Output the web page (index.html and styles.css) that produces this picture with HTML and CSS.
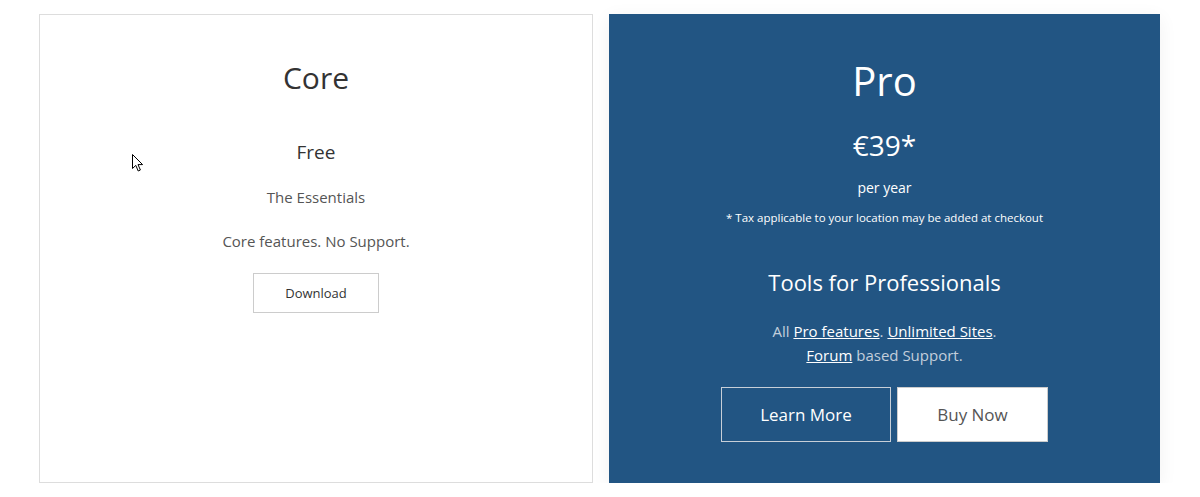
FILE: index.html
```html
<!DOCTYPE html>
<html lang="en">
<head>
    <meta charset="UTF-8">
    <meta name="viewport" content="width=device-width, initial-scale=1.0">
    <title>Pricing</title>
    <link rel="stylesheet" href="styles.css">
</head>
<body>
    <div class="pricing">
        <!-- Plan gratuito -->
        <div class="plan plan-core">
            <h2 class="plan-name">Core</h2>
            <p class="plan-price">Free</p>
            <p class="plan-tagline">The Essentials</p>
            <p class="plan-desc">Core features. No Support.</p>
            <a class="btn btn-plain" href="#">Download</a>
        </div>

        <!-- Plan de pago -->
        <div class="plan plan-pro">
            <h2 class="plan-name">Pro</h2>
            <p class="plan-price">€39*</p>
            <p class="plan-period">per year</p>
            <p class="plan-note">* Tax applicable to your location may be added at checkout</p>
            <h3 class="plan-tagline">Tools for Professionals</h3>
            <p class="plan-desc">All <a href="#">Pro features</a>. <a href="#">Unlimited Sites</a>.<br><a href="#">Forum</a> based Support.</p>
            <div class="plan-actions">
                <a class="btn btn-outline" href="#">Learn More</a>
                <a class="btn btn-solid" href="#">Buy Now</a>
            </div>
        </div>
    </div>

    <!-- Cursor del ratón -->
    <svg class="cursor" width="14" height="20" viewBox="0 0 14 20">
        <path d="M1.5 1.5 L1.5 15.5 L4.8 12.4 L7.2 18 L9.4 17 L7 11.6 L11.6 11.6 Z" fill="#fff" stroke="#000" stroke-width="1" stroke-linejoin="miter"/>
    </svg>
</body>
</html>
```

FILE: styles.css
```css
body {
    margin: 0;
    padding: 0;
    background-color: #fff;
    font-family: 'Open Sans', 'Noto Sans', sans-serif;
    overflow: hidden;
}

.pricing {
    display: flex;
    gap: 16px;
    padding: 14px 40px 0 39px;
}

.plan {
    box-sizing: border-box;
    height: 469px;
    text-align: center;
}

.plan p {
    margin: 0;
}

.plan-core {
    width: 554px;
    border: 1px solid #ddd;
    padding-top: 43px;
    color: #333;
}

.plan-core .plan-name {
    margin: 0;
    font-size: 30px;
    font-weight: 400;
    line-height: 40px;
}

.plan-core .plan-price {
    margin-top: 41px;
    font-size: 19px;
    line-height: 26px;
}

.plan-core .plan-tagline {
    margin-top: 20px;
    font-size: 15px;
    line-height: 24px;
    color: #555;
}

.plan-core .plan-desc {
    margin-top: 20px;
    font-size: 15px;
    line-height: 24px;
    color: #555;
}

.btn {
    display: inline-block;
    box-sizing: border-box;
    text-decoration: none;
}

.btn-plain {
    margin-top: 20px;
    width: 126px;
    height: 40px;
    line-height: 38px;
    border: 1px solid #ccc;
    font-size: 13px;
    color: #333;
}

/* Tarjeta azul */
.plan-pro {
    width: 551px;
    padding-top: 49px;
    background-color: #225583;
    color: #fff;
    box-shadow: 0 4px 18px rgba(0, 0, 0, 0.06);
}

.plan-pro .plan-name {
    margin: 0;
    font-size: 40px;
    font-weight: 400;
    line-height: 36px;
}

.plan-pro .plan-price {
    margin-top: 28px;
    font-size: 28px;
    line-height: 36px;
}

.plan-pro .plan-period {
    margin-top: 14px;
    font-size: 14px;
    line-height: 22px;
}

.plan-pro .plan-note {
    margin-top: 11px;
    font-size: 11.5px;
    line-height: 16px;
}

.plan-pro .plan-tagline {
    margin: 41px 0 0;
    font-size: 22px;
    font-weight: 400;
    line-height: 30px;
}

.plan-pro .plan-desc {
    margin-top: 22px;
    font-size: 15px;
    line-height: 24px;
    color: #c3cedb;
}

.plan-desc a {
    color: #fff;
}

.plan-actions {
    display: flex;
    justify-content: center;
    gap: 6px;
    margin-top: 20px;
}

.btn-outline,
.btn-solid {
    height: 55px;
    line-height: 53px;
    font-size: 17px;
}

.btn-outline {
    width: 170px;
    border: 1px solid #c8cfd8;
    color: #fff;
}

.btn-solid {
    width: 151px;
    border: 1px solid #ccc;
    background-color: #fff;
    color: #555;
}

.cursor {
    position: absolute;
    left: 131px;
    top: 153px;
}
```
